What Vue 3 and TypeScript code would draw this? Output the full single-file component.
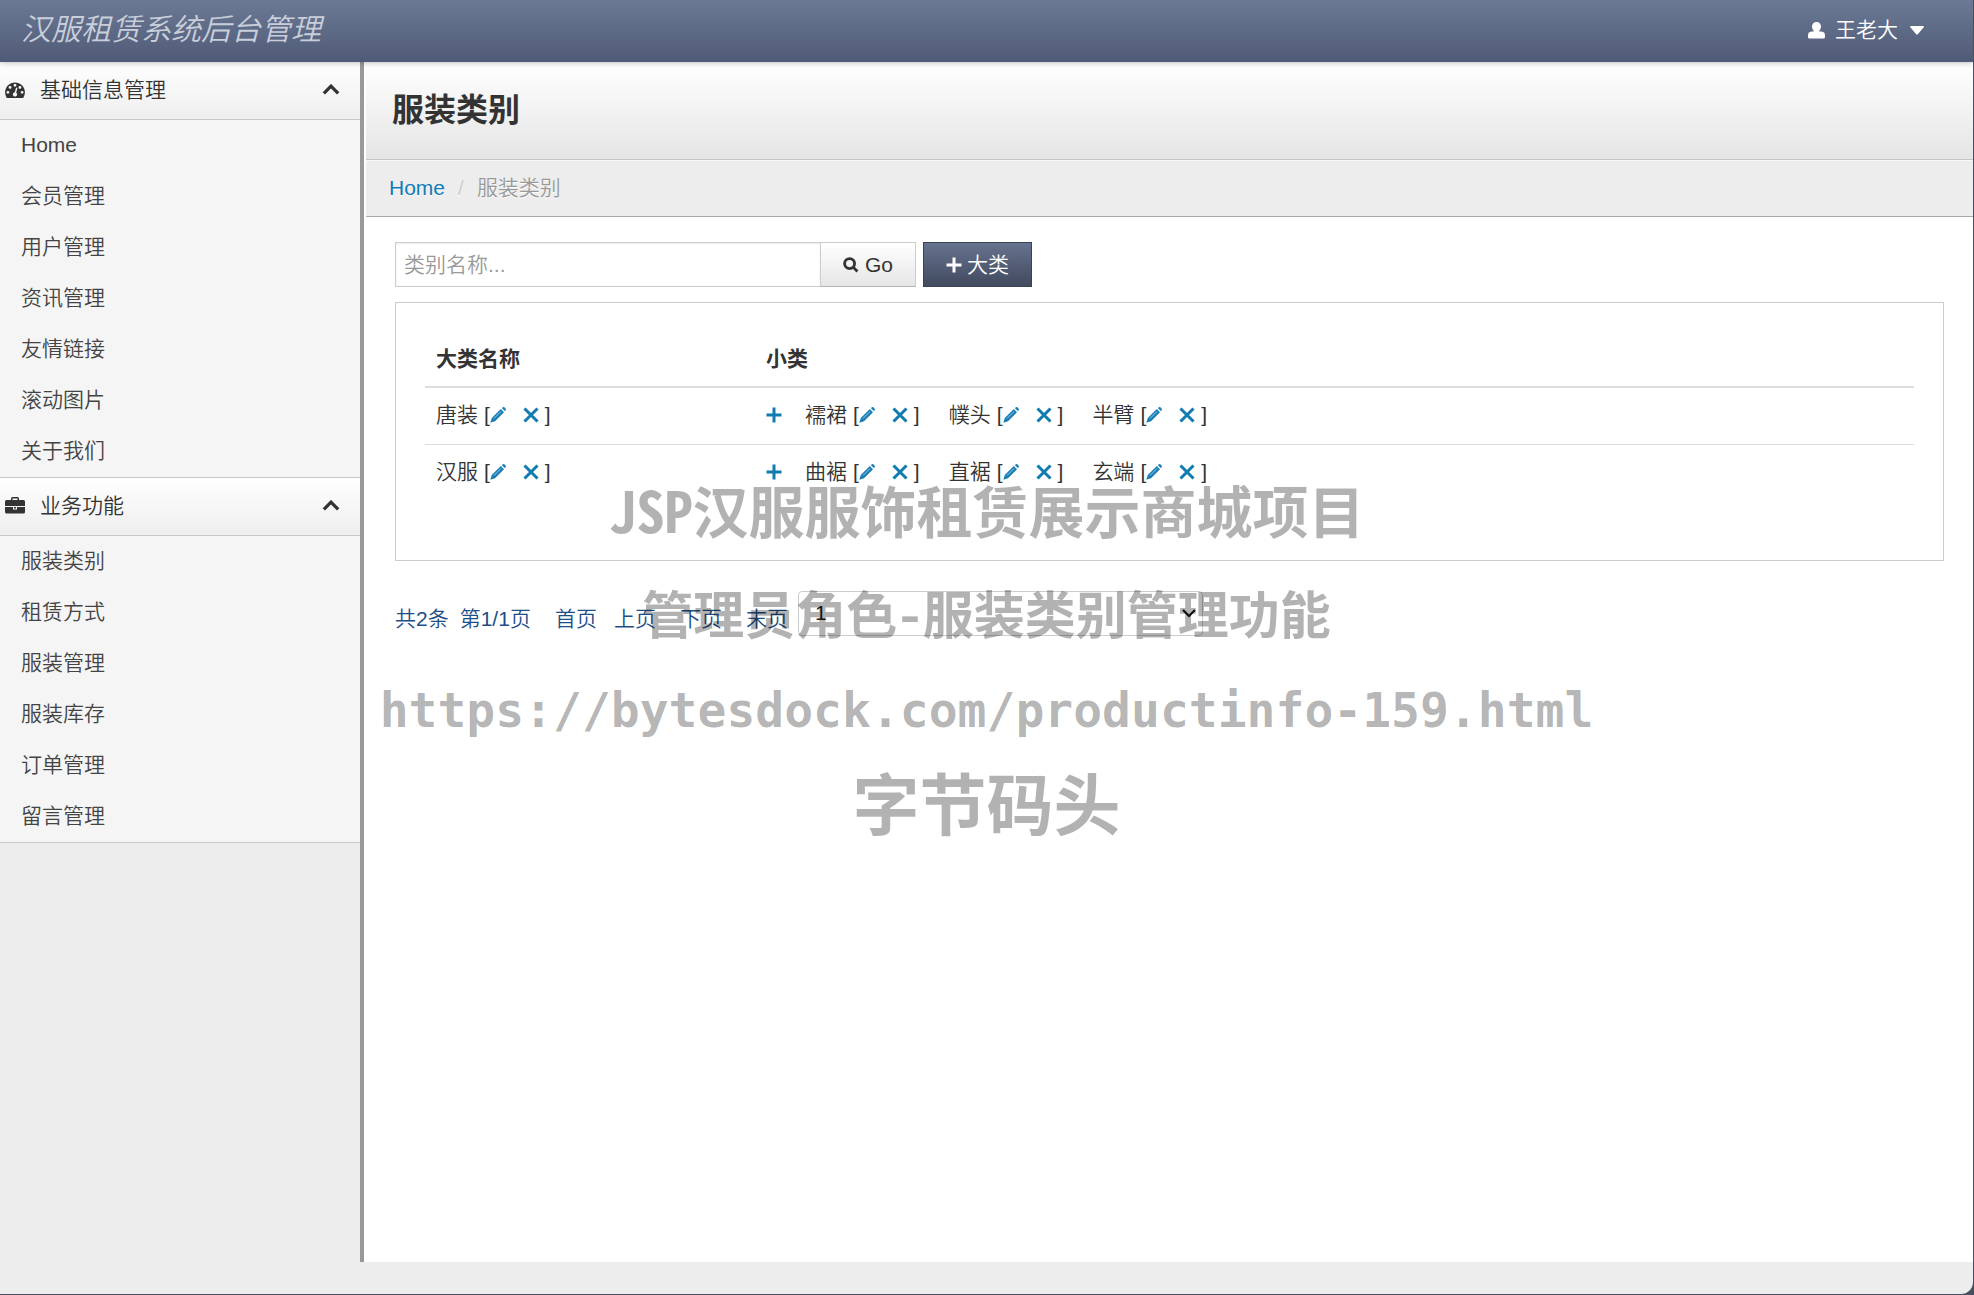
<script setup lang="ts">
import { ref } from 'vue'

interface MenuGroup {
  title: string
  icon: 'gauge' | 'briefcase'
  items: string[]
}

interface Category {
  name: string
  children: string[]
}

const groups: MenuGroup[] = [
  {
    title: '基础信息管理',
    icon: 'gauge',
    items: ['Home', '会员管理', '用户管理', '资讯管理', '友情链接', '滚动图片', '关于我们'],
  },
  {
    title: '业务功能',
    icon: 'briefcase',
    items: ['服装类别', '租赁方式', '服装管理', '服装库存', '订单管理', '留言管理'],
  },
]

const categories: Category[] = [
  { name: '唐装', children: ['襦裙', '幞头', '半臂'] },
  { name: '汉服', children: ['曲裾', '直裾', '玄端'] },
]

const keyword = ref('')
const page = ref('1')
</script>

<template>
  <div class="window">
    <header class="topbar">
      <a class="brand" href="#">汉服租赁系统后台管理</a>
      <button class="user" type="button">
        <svg class="user-icon" viewBox="0 0 17 17" aria-hidden="true">
          <path d="M8.500 0C11.200 0 13 1.900 13 4.600C13 6.800 12 8.400 10.800 9.200L14.500 9.800Q17 10.400 17 13V15Q17 16.500 15.500 16.500H1.500Q0 16.500 0 15V13Q0 10.400 2.500 9.800L6.200 9.200C5 8.400 4 6.800 4 4.600C4 1.900 5.800 0 8.500 0Z" />
        </svg>
        <span>王老大</span>
        <svg class="caret" viewBox="0 0 14 9" aria-hidden="true"><path d="M1 0H13Q14.500 0 13.500 1.500L8 8Q7 9 6 8L.500 1.500Q-.500 0 1 0Z" /></svg>
      </button>
    </header>

    <div class="body">
      <nav class="sidebar">
        <section v-for="group in groups" :key="group.title" class="group">
          <button class="group-head" type="button">
            <svg v-if="group.icon === 'gauge'" class="group-icon" viewBox="0 128 1792 1536" aria-hidden="true">
              <path d="M384 1152q0-53-37.500-90.500t-90.500-37.500-90.500 37.500-37.500 90.500 37.500 90.500 90.500 37.500 90.500-37.500 37.500-90.500zm192-448q0-53-37.500-90.500t-90.500-37.500-90.500 37.500-37.500 90.500 37.500 90.500 90.500 37.500 90.500-37.500 37.500-90.500zm428 481l101-382q6-26-7.500-48.500t-38.500-29.500-48 6.500-30 39.500l-101 382q-60 5-107 43.500t-63 98.500q-20 77 20 146t117 89 146-20 89-117q16-60-6-117t-72-91zm660-33q0-53-37.500-90.500t-90.500-37.500-90.500 37.500-37.500 90.500 37.500 90.500 90.500 37.500 90.500-37.500 37.500-90.500zm-640-640q0-53-37.500-90.500t-90.500-37.500-90.500 37.500-37.500 90.500 37.500 90.500 90.500 37.500 90.500-37.500 37.500-90.500zm448 192q0-53-37.500-90.500t-90.500-37.500-90.500 37.500-37.500 90.500 37.500 90.500 90.500 37.500 90.500-37.500 37.500-90.500zm320 448q0 261-141 483-19 29-54 29h-1402q-35 0-54-29-141-221-141-483 0-182 71-348t191-286 286-191 348-71 348 71 286 191 191 286 71 348z" />
            </svg>
            <svg v-else class="group-icon" viewBox="0 0 20 17" aria-hidden="true">
              <path fill-rule="evenodd" d="M6 3V1.500Q6 0 7.500 0H12.500Q14 0 14 1.500V3H18.500Q20 3 20 4.500V9H0V4.500Q0 3 1.500 3ZM7.500 3H12.500V1.500H7.500ZM0 10H8V12.500H12V10H20V15Q20 16.500 18.500 16.500H1.500Q0 16.500 0 15ZM9 10H11V11.500H9Z" />
            </svg>
            <span class="group-title">{{ group.title }}</span>
            <svg class="chevron" viewBox="0 0 16 10" aria-hidden="true"><path d="M1.500 8.500L8 2L14.500 8.500" /></svg>
          </button>
          <ul class="menu">
            <li v-for="item in group.items" :key="item"><a href="#">{{ item }}</a></li>
          </ul>
        </section>
      </nav>

      <main class="content">
        <div class="page-head"><h1>服装类别</h1></div>
        <nav class="breadcrumb">
          <a href="#">Home</a><span class="slash">/</span><span class="current">服装类别</span>
        </nav>

        <div class="inner">
          <form class="search" @submit.prevent>
            <input v-model="keyword" type="text" placeholder="类别名称..." aria-label="类别名称" />
            <button class="go" type="submit">
              <svg class="search-icon" viewBox="0 0 17 17" aria-hidden="true"><circle cx="7" cy="7" r="5.300" /><path d="M11 11L15.300 15.300" /></svg>
              <span>Go</span>
            </button>
            <button class="add" type="button">
              <svg class="plus" viewBox="0 0 16 16" aria-hidden="true"><path d="M8 .500V15.500M.500 8H15.500" /></svg>
              <span>大类</span>
            </button>
          </form>

          <div class="panel">
            <table>
              <thead>
                <tr><th class="col-name">大类名称</th><th>小类</th></tr>
              </thead>
              <tbody>
                <tr v-for="category in categories" :key="category.name">
                  <td>
                    <span class="entry">
                      <span class="entry-name">{{ category.name }}</span><span>[</span>
                      <a class="edit" href="#" aria-label="edit"><svg viewBox="0 0 16 16"><path d="M.300 15.700L1.800 11L10.800 2L14 5.200L5 14.200ZM11.800 1L13 .200Q14 -.200 15.200 1Q16.200 2.200 15.700 3.200L15 4.200Z" /><path class="shine" d="M4 11.500L11 4.500" /></svg></a>
                      <a class="remove" href="#" aria-label="remove"><svg viewBox="0 0 16 16"><path d="M1.500 1.500L14.500 14.500M14.500 1.500L1.500 14.500" /></svg></a><span>]</span>
                    </span>
                  </td>
                  <td>
                    <div class="entries">
                      <a class="add-child" href="#" aria-label="add"><svg viewBox="0 0 16 16"><path d="M8 .500V15.500M.500 8H15.500" /></svg></a>
                      <span v-for="child in category.children" :key="child" class="entry">
                        <span class="entry-name">{{ child }}</span><span>[</span>
                        <a class="edit" href="#" aria-label="edit"><svg viewBox="0 0 16 16"><path d="M.300 15.700L1.800 11L10.800 2L14 5.200L5 14.200ZM11.800 1L13 .200Q14 -.200 15.200 1Q16.200 2.200 15.700 3.200L15 4.200Z" /><path class="shine" d="M4 11.500L11 4.500" /></svg></a>
                        <a class="remove" href="#" aria-label="remove"><svg viewBox="0 0 16 16"><path d="M1.500 1.500L14.500 14.500M14.500 1.500L1.500 14.500" /></svg></a><span>]</span>
                      </span>
                    </div>
                  </td>
                </tr>
              </tbody>
            </table>
          </div>

          <div class="pager">
            <span class="total">共2条</span>
            <span class="position">第1/1页</span>
            <a class="first" href="#">首页</a>
            <a class="prev" href="#">上页</a>
            <a class="next" href="#">下页</a>
            <a class="last" href="#">末页</a>
            <span class="select-wrap">
              <select v-model="page" aria-label="页码"><option value="1">1</option></select>
              <svg class="select-arrow" viewBox="0 0 14 9" aria-hidden="true"><path d="M1 1L7 7L13 1" /></svg>
            </span>
          </div>
        </div>
      </main>
    </div>
    <footer class="footer"></footer>

    <div class="watermark">
      <p class="wm-project">JSP汉服服饰租赁展示商城项目</p>
      <p class="wm-feature">管理员角色-服装类别管理功能</p>
      <p class="wm-url">https://bytesdock.com/productinfo-159.html</p>
      <p class="wm-site">字节码头</p>
    </div>
  </div>
</template>

<style>
body {
  margin: 0;
  background: #4a4f60;
}
</style>

<style scoped>
* {
  box-sizing: border-box;
}
.window {
  position: relative;
  display: flex;
  flex-direction: column;
  min-height: calc(100vh - 1px);
  margin: 0 1px 1px 0;
  border-bottom-right-radius: 12px;
  overflow: hidden;
  background: #ededed;
  color: #333;
  font: 350 21px/30px "Liberation Sans", "Noto Sans CJK SC", sans-serif;
}
button,
input,
select {
  font: inherit;
  color: inherit;
}
button {
  cursor: pointer;
}
a {
  color: #0f7bb8;
  text-decoration: none;
}
svg {
  display: block;
  flex: none;
}
.topbar {
  position: relative;
  display: flex;
  justify-content: space-between;
  align-items: center;
  height: 62px;
  padding: 0 49px 2px 21px;
  background: linear-gradient(#6c7996, #4f5b76);
  box-shadow: 0 1px 6px rgba(0, 0, 0, 0.25);
  color: #fff;
}
.brand {
  color: #c9cedb;
  font-size: 30px;
  font-style: italic;
  line-height: 40px;
}
.user {
  display: flex;
  align-items: center;
  padding: 0;
  border: 0;
  background: none;
}
.user svg {
  fill: #fff;
}
.user-icon {
  width: 17px;
  height: 17px;
  margin-right: 10px;
}
.caret {
  width: 14px;
  height: 9px;
  margin-left: 12px;
}
.body {
  display: flex;
  flex: 1;
}
.sidebar {
  flex: none;
  width: 364px;
  border-right: 4px solid #999;
}
.group {
  border-bottom: 1px solid #c8c8c8;
  background: #f5f5f5;
}
.group-head {
  display: flex;
  align-items: center;
  width: 100%;
  height: 58px;
  padding: 0 20px 2px 5px;
  border: 0;
  border-bottom: 1px solid #c8c8c8;
  background: linear-gradient(#fff, #eeeeef);
  text-align: left;
}
.group-icon {
  width: 20px;
  height: 17px;
  margin-right: 15px;
  fill: #333;
}
.group-title {
  flex: 1;
}
.chevron {
  width: 18px;
  height: 11px;
  fill: none;
  stroke: #333;
  stroke-width: 3;
}
.menu {
  margin: 0;
  padding: 0;
  list-style: none;
}
.menu a {
  display: block;
  padding: 10px 21px 11px;
  color: #444;
}
.content {
  flex: 1;
  min-width: 0;
  padding-left: 2px;
  background: #fff;
}
.page-head {
  height: 98px;
  padding: 24px 26px;
  border-bottom: 1px solid #c4c4c4;
  background: linear-gradient(#fff, #e5e5e5);
}
h1 {
  margin: 0;
  font-size: 32px;
  font-weight: 700;
  line-height: 48px;
}
.breadcrumb {
  display: flex;
  height: 57px;
  padding: 12px 23px;
  border-top: 1px solid #f8f8f8;
  border-bottom: 1px solid #aaa;
  background: #ededed;
  text-shadow: 0 1px 0 #fff;
}
.slash {
  padding: 0 13px;
  color: #ccc;
}
.current {
  color: #999;
}
.inner {
  padding: 25px 29px;
}
.search {
  display: flex;
  height: 45px;
}
.search input {
  width: 426px;
  padding: 0 8px;
  border: 1px solid #ccc;
  outline: 0;
  background: #fff;
  box-shadow: inset 0 1px 2px rgba(0, 0, 0, 0.08);
}
.search input::placeholder {
  color: #999;
  opacity: 1;
}
.search button {
  display: flex;
  justify-content: center;
  align-items: center;
  gap: 6px;
  padding: 0;
}
.go {
  width: 95px;
  border: 1px solid #ccc;
  border-left: 0;
  border-bottom-color: #b3b3b3;
  background: linear-gradient(#fff, #e6e6e6);
}
.search-icon {
  width: 16px;
  height: 16px;
  fill: none;
  stroke: #333;
  stroke-width: 3;
}
.search .add {
  gap: 5px;
  width: 109px;
  margin-left: 7px;
  border: 1px solid #3a4257;
  background: linear-gradient(#66738f, #414a5e);
  color: #fff;
}
.plus {
  width: 16px;
  height: 16px;
  stroke: #fff;
  stroke-width: 3;
}
.panel {
  margin-top: 15px;
  padding: 29px 29px 59px;
  border: 1px solid #ccc;
}
table {
  width: 100%;
  border-collapse: collapse;
}
th,
td {
  height: 57px;
  padding: 0 11px;
  border-top: 1px solid #ddd;
  text-align: left;
}
td {
  padding-bottom: 2px;
}
th {
  height: 55px;
  border-top: 0;
  border-bottom: 2px solid #ddd;
  font-weight: 700;
}
.col-name {
  width: 330px;
}
.entry,
.entries {
  display: flex;
  align-items: center;
}
.entry {
  margin-right: 29px;
}
.entry-name {
  margin-right: 6px;
}
.edit,
.remove {
  margin-right: 17px;
}
.remove {
  margin-right: 6px;
}
.add-child {
  margin-right: 23px;
}
td svg {
  width: 16px;
  height: 16px;
}
.edit svg {
  fill: #187fb5;
}
.shine {
  stroke: #9cc9e2;
  stroke-width: 1;
}
.remove svg,
.add-child svg {
  fill: none;
  stroke: #0f7bb0;
  stroke-width: 3;
}
.pager {
  display: flex;
  align-items: center;
  margin-top: 30px;
  color: #1d4f86;
}
.pager > :not(.select-wrap) {
  padding-top: 10px;
}
.pager a {
  color: #1d4f86;
}
.total {
  margin-right: 11px;
}
.position {
  margin-right: 24px;
}
.first {
  margin-right: 17px;
}
.prev,
.next {
  margin-right: 24px;
}
.last {
  margin-right: 10px;
}
.select-wrap {
  position: relative;
  width: 405px;
}
select {
  display: block;
  width: 100%;
  height: 45px;
  padding: 0 16px 2px;
  border: 1px solid #ccc;
  border-radius: 4px;
  outline: 0;
  background: transparent;
  color: #222;
  appearance: none;
}
.select-arrow {
  position: absolute;
  top: 18px;
  right: 7px;
  width: 14px;
  height: 9px;
  fill: none;
  stroke: #111;
  stroke-width: 2;
  pointer-events: none;
}
.footer {
  height: 32px;
}
.watermark {
  position: absolute;
  top: 457px;
  right: 0;
  left: 0;
  color: rgba(0, 0, 0, 0.3);
  font-family: "Noto Sans Mono CJK SC", "Noto Sans CJK SC", monospace;
  font-weight: 700;
  text-align: center;
  white-space: nowrap;
  pointer-events: none;
}
.watermark p {
  margin: 0;
}
.wm-project {
  font-size: 56px;
  line-height: 104px;
}
.wm-feature {
  font-size: 51px;
  line-height: 102px;
}
.wm-url {
  font-family: "DejaVu Sans Mono", monospace;
  font-size: 48px;
  line-height: 94px;
}
.wm-site {
  font-size: 67px;
  line-height: 88px;
}
</style>
